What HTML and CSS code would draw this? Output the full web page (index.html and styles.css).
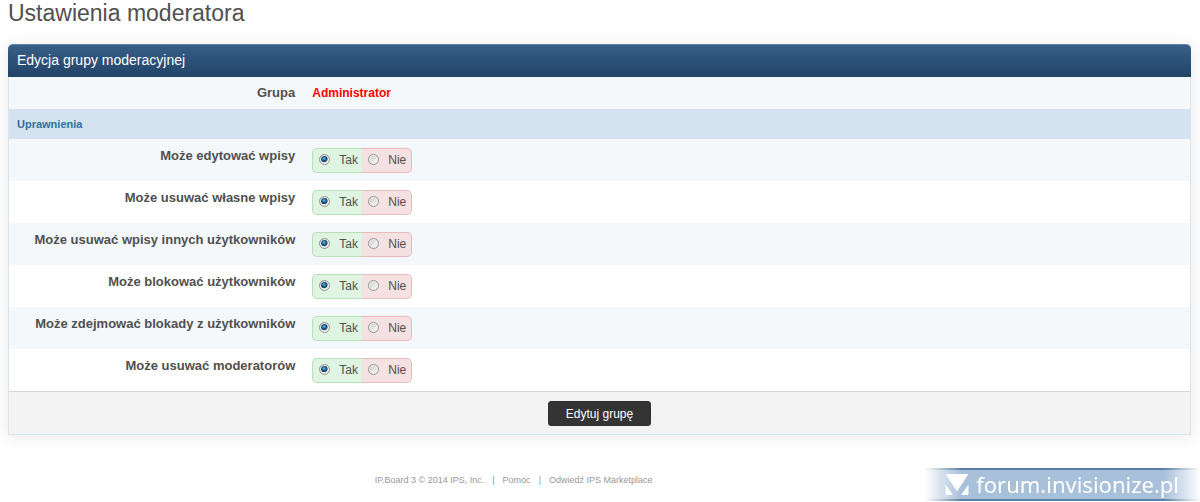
FILE: index.html
```html
<!DOCTYPE html>
<html lang="pl">
<head>
<meta charset="utf-8">
<title>Ustawienia moderatora</title>
<link rel="stylesheet" href="styles.css">
</head>
<body>
<h1 class="page-title">Ustawienia moderatora</h1>
<form class="panel">
  <h2 class="panel-title">Edycja grupy moderacyjnej</h2>
  <div class="row row-group">
    <div class="row-label">Grupa</div>
    <div class="row-field"><strong class="group-name">Administrator</strong></div>
  </div>
  <h3 class="section-title">Uprawnienia</h3>
  <div class="row" role="radiogroup" aria-labelledby="p1">
    <div class="row-label" id="p1">Może edytować wpisy</div>
    <div class="row-field"><div class="toggle"><label class="option yes"><input class="radio" type="radio" name="p1" checked>Tak</label><label class="option no"><input class="radio" type="radio" name="p1">Nie</label></div></div>
  </div>
  <div class="row alt" role="radiogroup" aria-labelledby="p2">
    <div class="row-label" id="p2">Może usuwać własne wpisy</div>
    <div class="row-field"><div class="toggle"><label class="option yes"><input class="radio" type="radio" name="p2" checked>Tak</label><label class="option no"><input class="radio" type="radio" name="p2">Nie</label></div></div>
  </div>
  <div class="row" role="radiogroup" aria-labelledby="p3">
    <div class="row-label" id="p3">Może usuwać wpisy innych użytkowników</div>
    <div class="row-field"><div class="toggle"><label class="option yes"><input class="radio" type="radio" name="p3" checked>Tak</label><label class="option no"><input class="radio" type="radio" name="p3">Nie</label></div></div>
  </div>
  <div class="row alt" role="radiogroup" aria-labelledby="p4">
    <div class="row-label" id="p4">Może blokować użytkowników</div>
    <div class="row-field"><div class="toggle"><label class="option yes"><input class="radio" type="radio" name="p4" checked>Tak</label><label class="option no"><input class="radio" type="radio" name="p4">Nie</label></div></div>
  </div>
  <div class="row" role="radiogroup" aria-labelledby="p5">
    <div class="row-label" id="p5">Może zdejmować blokady z użytkowników</div>
    <div class="row-field"><div class="toggle"><label class="option yes"><input class="radio" type="radio" name="p5" checked>Tak</label><label class="option no"><input class="radio" type="radio" name="p5">Nie</label></div></div>
  </div>
  <div class="row alt" role="radiogroup" aria-labelledby="p6">
    <div class="row-label" id="p6">Może usuwać moderatorów</div>
    <div class="row-field"><div class="toggle"><label class="option yes"><input class="radio" type="radio" name="p6" checked>Tak</label><label class="option no"><input class="radio" type="radio" name="p6">Nie</label></div></div>
  </div>
  <div class="actions"><button class="submit" type="submit">Edytuj grupę</button></div>
</form>
<footer class="footer">
  <nav class="footer-links">
    <span>IP.Board 3 © 2014 IPS, Inc.</span>
    <span class="sep first">|</span>
    <a class="link" href="#">Pomoc</a>
    <span class="sep">|</span>
    <a class="link" href="#">Odwiedź IPS Marketplace</a>
  </nav>
  <div class="badge">
    <svg class="badge-logo" viewBox="0 0 24 22" width="24" height="22" aria-hidden="true">
      <path d="M0.500 0H23.500L12 17.500Z" fill="#fff"/>
      <path d="M0.500 10.500L8 21H2Q0.500 21 0.500 19.500ZM23.500 10.500L16 21H22Q23.500 21 23.500 19.500Z" fill="#fff"/>
    </svg>
    <span>forum.invisionize.pl</span>
  </div>
</footer>
</body>
</html>
```
FILE: styles.css
```css
* {
  box-sizing: border-box;
}

body {
  margin: 0;
  padding: 0 9px 0 8px;
  background: #fefefe;
  color: #505050;
  font-family: "Liberation Sans", Arial, sans-serif;
  font-size: 12px;
}

.page-title {
  margin: 0 0 17px;
  color: #505050;
  font-size: 23px;
  font-weight: 400;
  line-height: 27px;
}

.panel {
  border: 1px solid #d5e6ef;
  border-top: 0;
  border-radius: 5px 5px 0 0;
  box-shadow: 0 2px 16px rgba(0, 0, 0, 0.08);
}

.panel-title {
  margin: 0 -1px;
  padding: 0 9px;
  border-top: 1px solid #5f86a8;
  border-bottom: 1px solid #27486b;
  border-radius: 5px 5px 0 0;
  background: linear-gradient(#375f87, #234469);
  color: #fff;
  font-size: 14px;
  font-weight: 400;
  line-height: 31px;
}

.row {
  display: grid;
  grid-template-columns: 25% 1fr;
  padding: 9px 0 8px;
  background: #f4f8fb;
}

.row-group {
  padding: 8px 0;
}

.row.alt {
  background: #fff;
}

.row-label {
  padding-right: 9px;
  font-size: 13px;
  font-weight: 700;
  line-height: 16px;
  text-align: right;
}

.row-field {
  padding-left: 8px;
}

.group-name {
  color: #f00;
  line-height: 16px;
}

.section-title {
  margin: 0;
  padding: 0 8px;
  background: #d5e3f0;
  color: #2f6f9f;
  font-size: 11px;
  line-height: 30px;
}

.toggle {
  display: inline-flex;
  vertical-align: top;
}

.option {
  display: flex;
  align-items: center;
  width: 50px;
  height: 25px;
  padding-left: 6px;
  border: 1px solid;
  line-height: 25px;
}

.yes {
  border-color: #b5e0b8;
  border-right: 0;
  border-radius: 5px 0 0 5px;
  background: #e0f4e2;
}

.no {
  border-color: #e8bcbc;
  border-left: 0;
  border-radius: 0 5px 5px 0;
  background: #f5e1e1;
}

.radio {
  appearance: none;
  flex: none;
  width: 11px;
  height: 11px;
  margin: 0 9px 2px 0;
  border: 1px solid #929292;
  border-radius: 50%;
  background: linear-gradient(135deg, #c9c9c9, #fff);
  box-shadow: inset 0 0 0 1px #f2f2f2;
}

.radio:checked {
  background: radial-gradient(circle at 45% 40%, #65c4e6 0, #17608b 2px, #123b5a 3px, #dfe4e8 4px);
}

.actions {
  padding: 9px 9px 8px;
  border-top: 1px solid #d3d7d9;
  background: #f3f3f3;
  text-align: center;
}

.submit {
  display: inline-block;
  height: 25px;
  padding: 0 17px;
  border: 1px solid #303030;
  border-radius: 3px;
  background: #343434;
  color: #fff;
  font: 12px "Liberation Sans", Arial, sans-serif;
  vertical-align: top;
}

.footer {
  display: grid;
  grid-template-columns: 31% 1fr auto;
  align-items: start;
  margin-top: 33px;
}

.footer-links {
  display: flex;
  grid-column: 2;
  gap: 8px;
  padding-top: 6px;
  color: #999;
  font-size: 9px;
  line-height: 12px;
}

.link {
  color: inherit;
  text-decoration: none;
}

.sep.first {
  color: #5c9cc8;
}

.badge {
  display: flex;
  grid-column: 3;
  align-items: center;
  gap: 7px;
  height: 33px;
  margin-right: -9px;
  padding: 0 21px 0 20px;
  border: solid #5c7fa5;
  border-width: 2px 0;
  background: #a9c0da;
  color: #fff;
  font-family: "Noto Sans", sans-serif;
  font-size: 22px;
  line-height: 29px;
  mask-image: linear-gradient(90deg, transparent, #000 36px, #000 calc(100% - 36px), transparent);
}

.badge-logo {
  flex: none;
}
```
